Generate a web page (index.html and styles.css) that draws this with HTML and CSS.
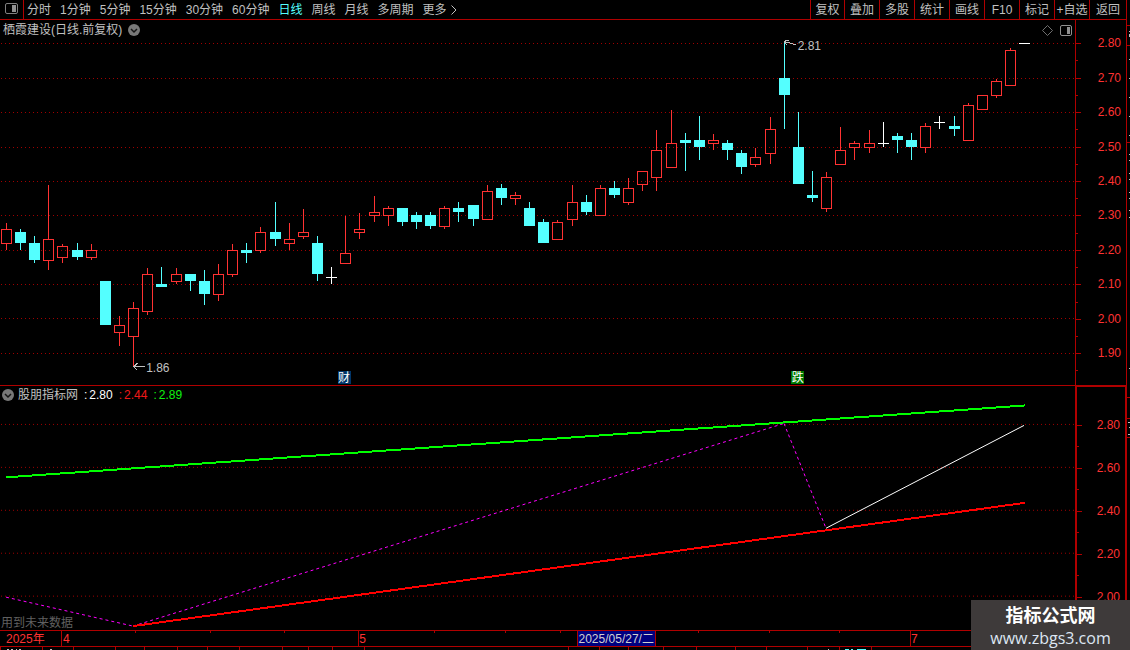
FILE: index.html
```html
<!DOCTYPE html>
<html lang="zh-CN">
<head>
<meta charset="utf-8">
<title>栖霞建设 日线</title>
<link rel="stylesheet" href="styles.css">
</head>
<body>
<div class="terminal">
  <header class="toolbar">
    <button class="panel-toggle" aria-label="侧栏">
      <svg width="13" height="11" viewBox="0 0 13 11"><rect x=".5" y=".5" width="12" height="10" rx="1.5" fill="none" stroke="#808080"/><rect x="7" y="2" width="4" height="7" fill="#909090"/></svg>
    </button>
    <nav class="periods">
      <button>分时</button><button>1分钟</button><button>5分钟</button><button>15分钟</button><button>30分钟</button><button>60分钟</button><button class="active">日线</button><button>周线</button><button>月线</button><button>多周期</button><button class="more">更多<svg width="6" height="10" viewBox="0 0 6 10"><path d="M.5.5 5 5 .5 9.5" fill="none" stroke="#c0c0c0"/></svg></button>
    </nav>
    <div class="tools">
      <button>复权</button><button>叠加</button><button>多股</button><button>统计</button><button>画线</button><button>F10</button><button>标记</button><button>+自选</button><button>返回</button>
    </div>
  </header>

  <section class="pane pane-price">
    <div class="plot">
      <svg class="canvas" id="price" viewBox="0 20 1075 365" preserveAspectRatio="none">
        <path class="grid" d="M1 43.5H1075M1 78.5H1075M1 112.5H1075M1 147.5H1075M1 181.5H1075M1 215.5H1075M1 250.5H1075M1 284.5H1075M1 318.5H1075M1 353.5H1075"/>
        <g id="candles"></g>
        <path class="pointer" d="M133 366.5H145M137.500 363.5H136.500L134 366.500 137 369.500M789 40.500H786L784.500 42 787 45M785 42.500H789L796 45"/>
      </svg>
      <div class="pane-head">
        <span>栖霞建设(日线.前复权)</span>
        <button class="fold" aria-label="展开"><svg width="12" height="12" viewBox="0 0 12 12"><circle cx="6" cy="6" r="6" fill="#787878"/><path d="M3 5 6 8 9 5" fill="none" stroke="#151515" stroke-width="1.500"/></svg></button>
        <span class="head-icons">
          <svg width="11" height="11" viewBox="0 0 11 11"><path d="M5.500.5 10.500 5.500 5.500 10.500.5 5.500Z" fill="none" stroke="#707070"/></svg>
          <svg width="12" height="11" viewBox="0 0 12 11"><rect x=".5" y=".5" width="11" height="10" rx="1.500" fill="none" stroke="#909090"/><rect x="7" y="2" width="3" height="7" fill="#909090"/></svg>
        </span>
      </div>
      <span class="mark mark-high">2.81</span>
      <span class="mark mark-low">1.86</span>
      <span class="badge badge-report">财</span>
      <span class="badge badge-drop">跌</span>
    </div>
    <ol class="axis axis-price">
      <li>2.80</li><li>2.70</li><li>2.60</li><li>2.50</li><li>2.40</li><li>2.30</li><li>2.20</li><li>2.10</li><li>2.00</li><li>1.90</li>
    </ol>
  </section>

  <section class="pane pane-indicator">
    <div class="plot">
      <svg class="canvas" viewBox="0 386 1075 244" preserveAspectRatio="none">
        <path class="grid" d="M1 424.500H1075M1 467.500H1075M1 510.500H1075M1 553.500H1075M1 596.500H1075"/>
        <path class="forecast" d="M6 597.500 133 626.500M133 626.500 784 423.500M784 423.500 826 528.500"/>
        <path class="recent" d="M826 528.500 1024 425.500"/>
        <path class="support" d="M133 626.500 1025 503"/>
        <path class="resist" d="M6 477.500 1025 405.500"/>
      </svg>
      <div class="pane-head">
        <button class="fold" aria-label="展开"><svg width="12" height="12" viewBox="0 0 12 12"><circle cx="6" cy="6" r="6" fill="#787878"/><path d="M3 5 6 8 9 5" fill="none" stroke="#151515" stroke-width="1.500"/></svg></button>
        <span>股朋指标网</span>
        <span class="value value-a"><i>:</i>2.80</span>
        <span class="value value-b"><i>:</i>2.44</span>
        <span class="value value-c"><i>:</i>2.89</span>
      </div>
      <span class="note">用到未来数据</span>
    </div>
    <ol class="axis axis-indicator">
      <li>2.80</li><li>2.60</li><li>2.40</li><li>2.20</li><li>2.00</li>
    </ol>
  </section>

  <footer class="timeline">
    <svg class="canvas" viewBox="0 630 1126 20" preserveAspectRatio="none">
      <path class="rule" d="M0 630.500H1126M0 646.500H1126M61.500 630V646M358.500 630V646M910.500 630V646M135.500 631V633M210.500 631V633M284.500 631V633M434.500 631V633M505.500 631V633M560.500 631V633M698.500 631V633M769.500 631V633M839.500 631V633"/>
      <path class="rule" d="M.5 647V650M42.500 647V650M73.500 647V650M115.500 647V650M144.500 647V650M177.500 647V650M207.500 647V650M239.500 647V650M282.500 647V650M308.500 647V650M332.500 647V650M364.500 647V650M568.500 647V650M599.500 647V650M628.500 647V650M663.500 647V650M696.500 647V650M735.500 647V650M766.500 647V650M807.500 647V650M839.500 647V650M871.500 647V650"/>
      <path d="M7 649.500H9M11 649.500H13M16 649.500H17M19 649.500H21M50 649.500H52M828 649.500H829" stroke="#c0c0c0"/>
      <path d="M845 649.500H849M851 649.500H853M857 649.500H866" stroke="#54ffff"/>
    </svg>
    <span class="date date-year">2025年</span>
    <span class="date date-apr">4</span>
    <span class="date date-may">5</span>
    <span class="date date-cursor">2025/05/27/二</span>
    <span class="date date-jul">7</span>
  </footer>
</div>

<aside class="rail">
  <svg class="canvas" viewBox="0 0 3 650" preserveAspectRatio="none">
    <path class="rule" d="M0 25.500H3M0 45.500H3M0 142.500H3M0 397.500H3M0 418.500H3M0 437.500H3"/>
    <path d="M2.500 31V32M2.500 34V37M2.500 59V60M2.500 78V79M2.500 97V98M2.500 116V117M2.500 135V136M2.500 154V155M2.500 160V161M2.500 173V174M2.500 179V180M2.500 192V193M2.500 198V199M2.500 210V211M2.500 217V218M2.500 368V369M1 422.500H3M2 427.500H3M1 434.500H3" stroke="#c0c0c0" fill="none"/>
  </svg>
</aside>

<div class="watermark">
  <strong>指标公式网</strong>
  <span>www.zbgs3.com</span>
</div>
<script src="candles.js"></script>
</body>
</html>
```

FILE: styles.css
```css
* { box-sizing: border-box; }

body {
  margin: 0;
  min-height: 100vh;
  display: flex;
  position: relative;
  background: #000;
  color: #c0c0c0;
  font: 12px/16px "Liberation Sans", "Noto Sans CJK SC", sans-serif;
}

button {
  margin: 0;
  padding: 0;
  border: 0;
  background: none;
  color: inherit;
  font: inherit;
  white-space: nowrap;
}

svg { display: block; flex: none; }

.terminal {
  flex: 1;
  min-width: 0;
  display: flex;
  flex-direction: column;
  border-right: 1px solid #b00000;
}

.toolbar {
  display: flex;
  height: 20px;
  border-bottom: 1px solid #b00000;
}

.panel-toggle {
  width: 24px;
  padding: 0 0 2px 5px;
  border-right: 1px solid #b00000;
}

.periods {
  flex: 1;
  display: flex;
  gap: 9px;
  padding-left: 3px;
}

.periods .active { color: #54ffff; }

.more {
  display: flex;
  align-items: center;
  gap: 4px;
}

.tools { display: flex; }

.tools button {
  width: 35px;
  border-left: 1px solid #b00000;
}

.tools button:first-child { width: 34px; }
.tools button:last-child { width: 37px; }

.pane {
  display: flex;
  min-height: 0;
}

.pane-price {
  flex: 366 1 0;
  border-bottom: 1px solid #b00000;
}

.pane-indicator { flex: 244 1 0; }

.plot {
  flex: 1;
  min-width: 0;
  position: relative;
}

.canvas {
  position: absolute;
  inset: 0;
  width: 100%;
  height: 100%;
  shape-rendering: crispEdges;
}

.grid {
  fill: none;
  stroke: #a00000;
  stroke-dasharray: 1 3;
}

.rule { fill: none; stroke: #b00000; }
.pointer { fill: none; stroke: #c0c0c0; }
.up { fill: none; stroke: #ff3232; }
.down { fill: #54ffff; }
.flat { fill: #fff; }

.forecast {
  fill: none;
  stroke: #f0f;
  stroke-dasharray: 3 3;
}

.recent { fill: none; stroke: #fff; }
.support { fill: none; stroke: #f00; stroke-width: 2px; }
.resist { fill: none; stroke: #0f0; stroke-width: 2px; }

.pane-head {
  position: relative;
  display: flex;
  align-items: center;
  gap: 6px;
  padding: 2px 3px;
}

.pane-indicator .pane-head {
  gap: 4px;
  padding: 1px 2px;
}

.head-icons {
  display: flex;
  gap: 7px;
  margin-left: auto;
}

.value {
  display: flex;
  gap: 2px;
  margin-left: 2px;
}

.value i { font-style: normal; }
.value-a { color: #fff; }
.value-b { color: #f01818; }
.value-c { color: #10f010; }

.mark { position: absolute; }
.mark-high { left: 74.2%; top: 4.8%; }
.mark-low { left: 13.6%; top: 93%; }

.badge {
  position: absolute;
  bottom: 1px;
  width: 13px;
  height: 13px;
  color: #fff;
  line-height: 14px;
  text-align: center;
}

.badge-report { left: 31.4%; background: #003568; }
.badge-drop { left: 73.6%; background: #007800; }

.note {
  position: absolute;
  left: 1px;
  bottom: 0;
  line-height: 14px;
  color: #606060;
}

.axis {
  width: 51px;
  margin: 0;
  display: flex;
  flex-direction: column;
  list-style: none;
  color: #ff3232;
  border-left: 1px solid #b00000;
}

.axis-price { padding: 6px 0 15px; }

.axis-indicator {
  padding: 16px 0 12px;
  border: solid #b00000;
  border-width: 1px 1px 0 2px;
}

.axis li {
  flex: 1;
  position: relative;
  display: flex;
  align-items: center;
  justify-content: flex-end;
  padding-right: 5px;
}

.axis li::before,
.axis li::after {
  content: "";
  position: absolute;
  left: 0;
  height: 1px;
  background: #b00000;
}

.axis li::before { top: 50%; width: 5px; }
.axis li::after { top: 100%; width: 2px; }

.timeline {
  position: relative;
  height: 20px;
  color: #ff3232;
}

.date {
  position: absolute;
  top: 1px;
  line-height: 16px;
  height: 15px;
  white-space: nowrap;
}

.date-year { left: 6px; }
.date-apr { left: 5.6%; }
.date-may { left: 31.9%; }
.date-jul { left: 80.9%; }

.date-cursor {
  left: 51.2%;
  padding: 0 1px;
  border: solid #b00000;
  border-width: 0 1px;
  background: #000080;
  color: #d0d0d0;
}

.rail {
  position: relative;
  width: 3px;
}

.watermark {
  position: absolute;
  right: 0;
  bottom: 0;
  width: 159px;
  height: 50px;
  padding-top: 1px;
  display: flex;
  flex-direction: column;
  align-items: center;
  background: #3e3a3a;
  color: #fff;
}

.watermark strong {
  font: bold 18px/26px "Noto Sans CJK SC", sans-serif;
}

.watermark span {
  color: #dde6f2;
  font: 16px/22px "Open Sans", sans-serif;
}
```

FILE: candles.js
```javascript
// kind (u = up, d = down, f = flat), centre, wick top, body top, body bottom, wick bottom
const bars = `
u 6 223 229 244 250|d 20 229 232 243 250|d 34 236 243 260 263|u 48 185 239 261 270
u 62 244 246 258 263|d 77 243 250 257 260|u 91 244 250 258 260|d 105 281 281 325 325
u 119 316 325 333 346|u 133 302 308 337 366|u 147 268 274 312 315|d 161 267 284 287 287
u 176 268 274 282 284|d 190 274 274 281 291|d 204 270 281 294 305|u 218 264 274 295 301
u 232 244 250 275 277|d 246 243 250 253 263|u 260 227 232 251 253|d 275 202 232 239 246
u 289 223 239 244 250|u 303 209 232 237 239|d 317 236 243 274 281|f 331 267 277 278 284
u 345 216 253 264 264|u 359 213 229 233 239|u 374 196 212 216 222|u 388 206 208 216 226
d 402 208 208 222 226|d 416 212 215 222 229|d 430 212 215 226 229|u 444 206 208 227 229
d 458 202 208 212 222|d 473 205 205 219 226|u 487 185 191 220 220|d 501 184 188 198 205
u 515 192 195 199 205|d 529 202 208 226 226|d 543 219 222 243 243|u 557 220 222 240 240
u 572 185 202 220 226|d 586 195 202 212 215|u 600 185 188 216 216|d 614 181 188 195 198
u 628 178 188 203 205|u 642 171 171 185 191|u 656 130 150 178 191|u 671 110 143 168 168
d 685 133 140 143 171|d 699 116 140 147 160|u 713 134 140 144 150|d 727 140 143 150 160
d 741 150 153 167 174|u 755 148 157 165 167|u 770 117 129 154 164|d 784 42 78 95 129
d 798 112 147 184 184|d 812 171 195 198 202|u 826 172 177 209 212|u 840 127 150 165 165
u 854 141 143 148 160|u 869 130 143 148 153|f 883 122 143 144 147|d 897 133 136 140 153
d 911 133 140 147 160|u 925 123 126 148 153|f 939 116 122 123 129|d 954 116 126 129 136
u 968 103 105 141 141|u 982 95 95 110 110|u 996 79 81 96 98|u 1010 48 50 86 86
f 1024 43 43 44 44`;

const shapes = { u: "", d: "", f: "" };
for (const bar of bars.trim().split(/[|\n]/)) {
  const [kind, ...numbers] = bar.split(" ");
  const [x, high, top, bottom, low] = numbers.map(Number);
  if (kind === "u") {
    shapes.u += `M${x - 4.5} ${top + 0.5}h10V${bottom - 0.5}h-10Z`;
    if (high < top) shapes.u += `M${x + 0.5} ${high}V${top}`;
    if (low > bottom) shapes.u += `M${x + 0.5} ${bottom}V${low}`;
  } else {
    shapes[kind] += `M${x - 5} ${top}h11V${bottom}h-11Z`;
    if (high < top) shapes[kind] += `M${x} ${high}h1V${top}h-1Z`;
    if (low > bottom) shapes[kind] += `M${x} ${bottom}h1V${low}h-1Z`;
  }
}

document.getElementById("candles").innerHTML =
  `<path class="up" d="${shapes.u}"/><path class="down" d="${shapes.d}"/><path class="flat" d="${shapes.f}"/>`;
```
